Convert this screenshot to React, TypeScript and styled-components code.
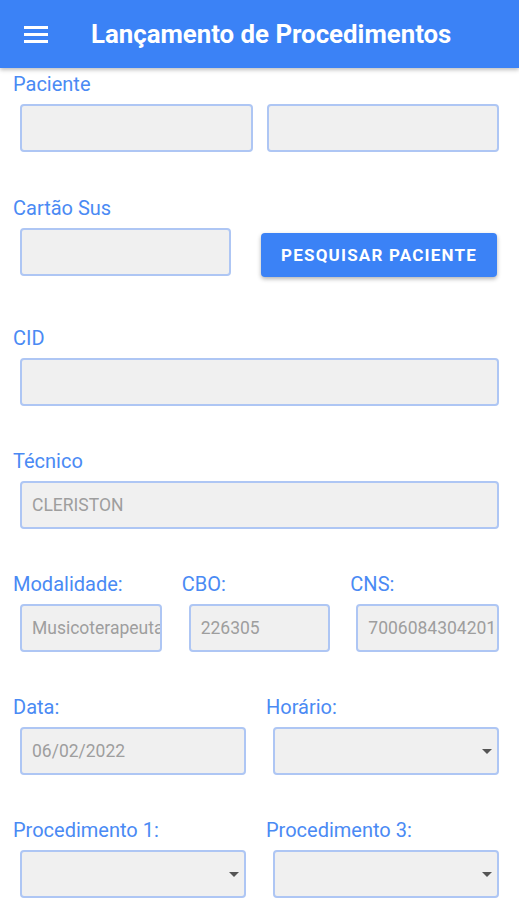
import React from 'react'
import styled, { createGlobalStyle } from 'styled-components'

const GlobalStyle = createGlobalStyle`
    body {
        margin: 0;
        background: #fff;
        font-family: Roboto, "Liberation Sans", sans-serif;
    }
`

const Header = styled.header`
    height: 68px;
    background: #3b82f6;
    display: flex;
    align-items: center;
    padding-left: 24px;
    box-shadow: 0 2px 4px rgba(0, 0, 0, 0.25);
    position: relative;
    z-index: 1;
`

const Burger = styled.div`
    width: 24px;
    display: flex;
    flex-direction: column;
    gap: 4px;
    span {
        display: block;
        height: 3px;
        background: #fff;
    }
`

const Title = styled.h1`
    margin: 0 0 0 43px;
    color: #fff;
    font-size: 25.8px;
    font-weight: 700;
`

const Form = styled.main`
    padding: 4px 0 0 13px;
    display: flex;
    flex-direction: column;
    gap: 43px;
`

const Section = styled.section<{ $extra?: number }>`
    display: flex;
    flex-direction: column;
    margin-bottom: ${p => p.$extra ?? 0}px;
`

const Label = styled.label`
    display: block;
    color: #4a8af4;
    font-size: 20px;
    line-height: 24px;
    height: 24px;
`

const Row = styled.div<{ $align?: string }>`
    display: flex;
    align-items: ${p => p.$align ?? 'stretch'};
`

const Col = styled.div`
    flex: 1;
    min-width: 0;
    display: flex;
    flex-direction: column;
`

const Field = styled.div<{ $w?: string; $ml?: number; $mr?: number; $grow?: boolean }>`
    box-sizing: border-box;
    height: 48px;
    margin: 8px ${p => p.$mr ?? 20}px 0 ${p => p.$ml ?? 7}px;
    width: ${p => p.$w ?? 'auto'};
    flex: ${p => (p.$grow ? 1 : 'none')};
    background: #f0f0f0;
    border: 2px solid #aec6f4;
    border-radius: 4px;
    display: flex;
    align-items: center;
    padding: 0 10px;
    color: #9e9e9e;
    font-size: 17.5px;
    white-space: nowrap;
    overflow: hidden;
    position: relative;
`

const Caret = styled.span`
    position: absolute;
    right: 5px;
    top: 20px;
    width: 0;
    height: 0;
    border-left: 5px solid transparent;
    border-right: 5px solid transparent;
    border-top: 5px solid #555;
`

const Button = styled.button`
    margin: 13px 0 6px 30px;
    width: 236px;
    height: 44px;
    border: none;
    border-radius: 4px;
    background: #3b82f6;
    color: #fff;
    font-family: Roboto, "Liberation Sans", sans-serif;
    font-weight: 700;
    font-size: 17px;
    letter-spacing: 1.2px;
    padding: 0;
    box-shadow: 0 2px 4px rgba(0, 0, 0, 0.3);
`

const App = () => {
    return (
        <>
            <GlobalStyle />
            <Header>
                <Burger><span /><span /><span /></Burger>
                <Title>Lançamento de Procedimentos</Title>
            </Header>
            <Form>
                <Section $extra={1}>
                    <Label>Paciente</Label>
                    <Row>
                        <Field $grow $mr={14} />
                        <Field $grow $ml={0} />
                    </Row>
                </Section>
                <Section>
                    <Label>Cartão Sus</Label>
                    <Row $align="flex-start">
                        <Field $w="211px" $mr={0} />
                        <Button>PESQUISAR PACIENTE</Button>
                    </Row>
                </Section>
                <Section>
                    <Label>CID</Label>
                    <Field />
                </Section>
                <Section>
                    <Label>Técnico</Label>
                    <Field>CLERISTON</Field>
                </Section>
                <Section>
                    <Row>
                        <Col>
                            <Label>Modalidade:</Label>
                            <Field>Musicoterapeuta</Field>
                        </Col>
                        <Col>
                            <Label>CBO:</Label>
                            <Field>226305</Field>
                        </Col>
                        <Col>
                            <Label>CNS:</Label>
                            <Field $ml={6}>700608430420160</Field>
                        </Col>
                    </Row>
                </Section>
                <Section>
                    <Row>
                        <Col>
                            <Label>Data:</Label>
                            <Field>06/02/2022</Field>
                        </Col>
                        <Col>
                            <Label>Horário:</Label>
                            <Field><Caret /></Field>
                        </Col>
                    </Row>
                </Section>
                <Section>
                    <Row>
                        <Col>
                            <Label>Procedimento 1:</Label>
                            <Field><Caret /></Field>
                        </Col>
                        <Col>
                            <Label>Procedimento 3:</Label>
                            <Field><Caret /></Field>
                        </Col>
                    </Row>
                </Section>
            </Form>
        </>
    )
}

export default App
